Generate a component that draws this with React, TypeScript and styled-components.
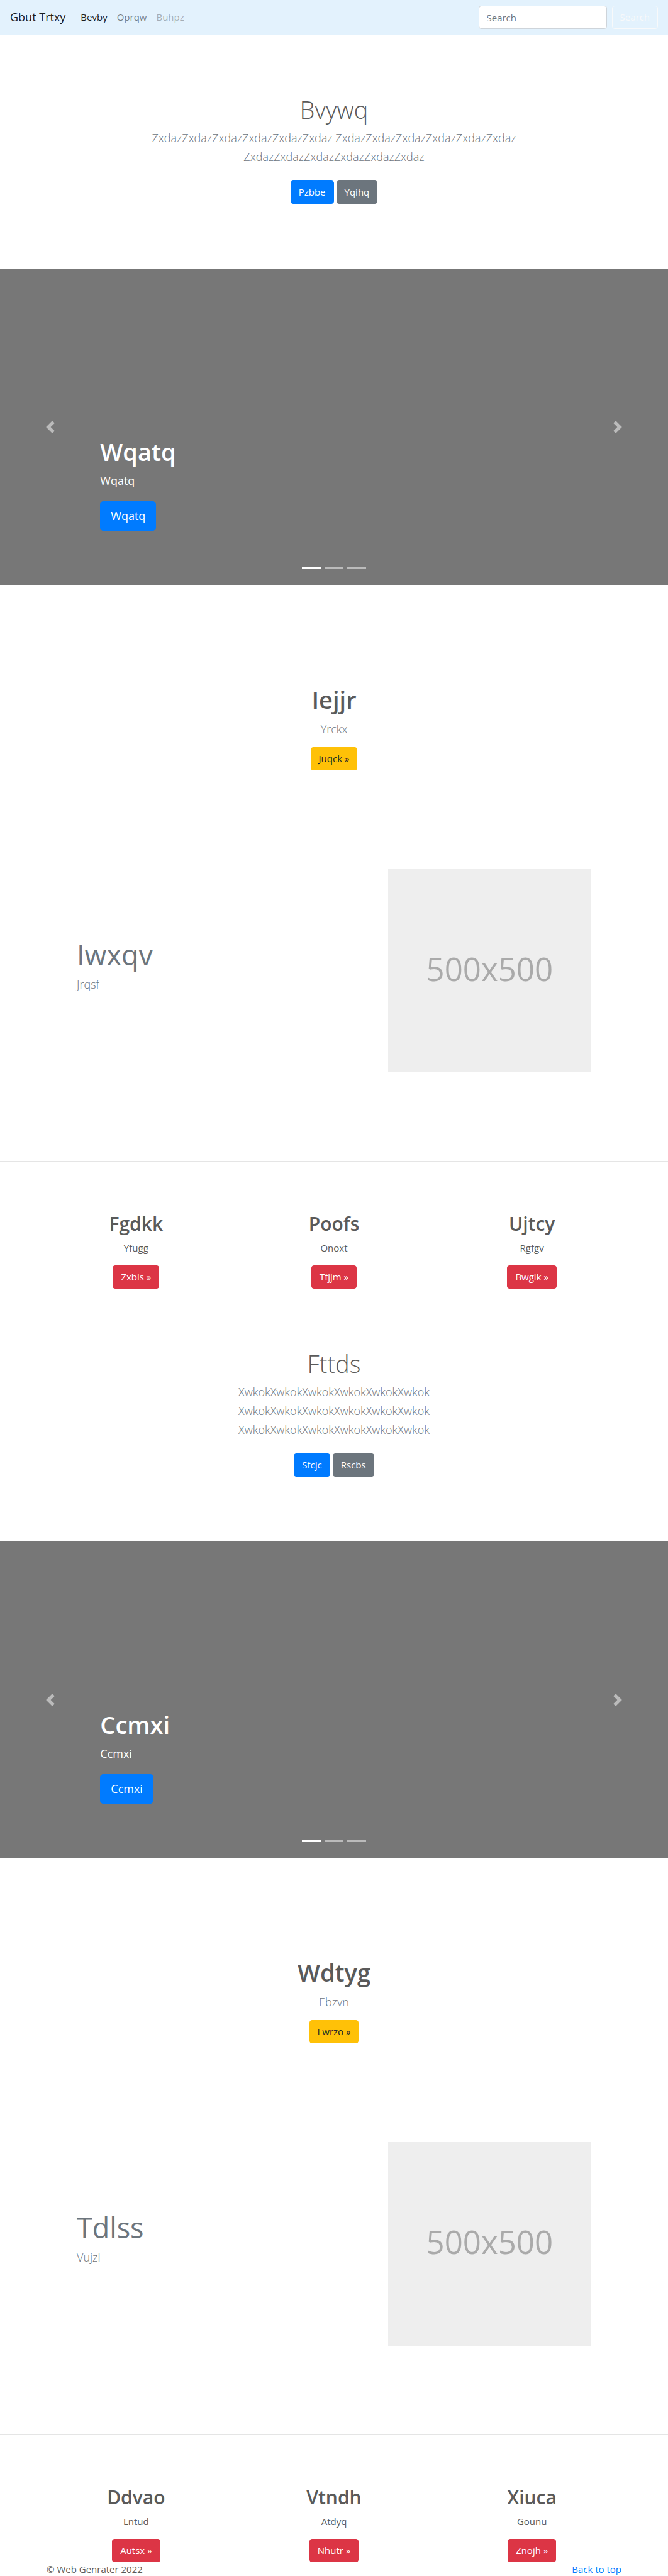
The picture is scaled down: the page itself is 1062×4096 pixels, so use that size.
import React from "react";
import styled, { createGlobalStyle, css } from "styled-components";

const GlobalStyle = createGlobalStyle`
  *, *::before, *::after { box-sizing: border-box; }
  body {
    margin: 0;
    background: #fff;
    color: #5a5a5a;
    font-family: "Open Sans", "Noto Sans", sans-serif;
    font-size: 15px;
    line-height: 23px;
  }
  h1, h2, p, ul { margin: 0; padding: 0; }
`;

type Tone = "primary" | "secondary" | "warning" | "danger";

const tones: Record<Tone, { bg: string; fg: string }> = {
  primary: { bg: "#007bff", fg: "#fff" },
  secondary: { bg: "#6c757d", fg: "#fff" },
  warning: { bg: "#ffc107", fg: "#212529" },
  danger: { bg: "#dc3545", fg: "#fff" },
};

const Navbar = styled.nav`
  display: flex;
  align-items: center;
  justify-content: space-between;
  padding: 9px 16px;
  background: #e3f2fd;
`;

const NavStart = styled.div`
  display: flex;
  align-items: center;
  gap: 24px;
`;

const Brand = styled.a`
  color: rgba(0, 0, 0, 0.9);
  font-size: 18px;
  line-height: 29px;
  text-decoration: none;
`;

const NavList = styled.ul`
  display: flex;
  gap: 15px;
  list-style: none;
`;

const NavLink = styled.a<{ $shade: number }>`
  color: rgba(0, 0, 0, ${(p) => p.$shade});
  text-decoration: none;
`;

const SearchForm = styled.form`
  display: flex;
  gap: 8px;
`;

const SearchInput = styled.input`
  width: 204px;
  height: 37px;
  padding: 6px 12px;
  border: 1px solid #ced4da;
  border-radius: 4px;
  background: #fff;
  color: #495057;
  font: inherit;
  &::placeholder { color: #6c757d; opacity: 1; }
`;

const SearchButton = styled.button`
  padding: 6px 12px;
  border: 1px solid #f8f9fa;
  border-radius: 4px;
  background: transparent;
  color: #f8f9fa;
  font: inherit;
`;

const Button = styled.a<{ $tone: Tone; $large?: boolean }>`
  display: inline-block;
  padding: 6px 12px;
  border: 1px solid ${(p) => tones[p.$tone].bg};
  border-radius: 4px;
  background: ${(p) => tones[p.$tone].bg};
  color: ${(p) => tones[p.$tone].fg};
  text-decoration: none;
  ${(p) =>
    p.$large &&
    css`
      padding: 8px 16px;
      border-radius: 5px;
      font-size: 18px;
      line-height: 29px;
    `}
`;

const Heading = styled.h1`
  margin-bottom: 8px;
  font-size: 38px;
  line-height: 47px;
  font-weight: 600;
`;

const HeroHeading = styled(Heading)`
  margin-bottom: 6px;
  font-weight: 300;
`;

const Lead = styled.p`
  color: #6c757d;
  font-size: 18px;
  line-height: 30px;
  font-weight: 300;
`;

const Hero = styled.section`
  display: flex;
  flex-direction: column;
  align-items: center;
  padding: 96px 16px 103px;
  text-align: center;
`;

const HeroLead = styled(Lead)`
  margin-bottom: 23px;
`;

const ButtonRow = styled.div`
  display: flex;
  gap: 4px;
`;

const CarouselBox = styled.section`
  position: relative;
  display: flex;
  flex-direction: column;
  justify-content: flex-end;
  height: 503px;
  padding: 0 15% 86px;
  background: #777;
  color: #fff;
`;

const Caption = styled.div`
  display: flex;
  flex-direction: column;
  align-items: flex-start;
`;

const CaptionText = styled.p`
  margin-bottom: 19px;
  font-size: 18px;
  line-height: 28px;
`;

const Control = styled.button<{ $side: "left" | "right" }>`
  position: absolute;
  top: 0;
  bottom: 0;
  ${(p) => p.$side}: 0;
  display: flex;
  align-items: center;
  justify-content: center;
  width: 15%;
  padding: 0;
  border: 0;
  background: none;
  color: #fff;
  opacity: 0.5;
`;

const Indicators = styled.div`
  position: absolute;
  right: 0;
  bottom: 25px;
  left: 0;
  display: flex;
  justify-content: center;
  gap: 6px;
`;

const Indicator = styled.button<{ $active: boolean }>`
  width: 30px;
  height: 3px;
  padding: 0;
  border: 0;
  background: #fff;
  opacity: ${(p) => (p.$active ? 1 : 0.5)};
`;

const Callout = styled.section`
  display: flex;
  flex-direction: column;
  align-items: center;
  padding: 159px 16px 157px;
  text-align: center;
`;

const CalloutLead = styled(Lead)`
  margin-bottom: 14px;
`;

const Container = styled.div`
  max-width: 944px;
  margin: 0 auto;
`;

const Feature = styled(Container)`
  display: grid;
  grid-template-columns: repeat(12, 1fr);
  column-gap: 30px;
  align-items: center;
  padding: 0 63px;
`;

const FeatureText = styled.div`
  grid-column: span 7;
  padding-bottom: 20px;
`;

const FeatureHeading = styled.h2`
  margin-bottom: 2px;
  color: #6c757d;
  font-size: 45px;
  line-height: 60px;
  font-weight: 400;
`;

const Placeholder = styled.div`
  grid-column: span 5;
  display: flex;
  align-items: center;
  justify-content: center;
  aspect-ratio: 1;
  padding-bottom: 8px;
  background: #eee;
  color: #aaa;
  font-size: 51px;
  line-height: 60px;
`;

const Divider = styled.hr`
  height: 1px;
  margin: 141px 0 80px;
  border: 0;
  background: #e5e5e5;
`;

const Columns = styled(Container)`
  display: grid;
  grid-template-columns: repeat(3, 1fr);
`;

const Column = styled.div`
  display: flex;
  flex-direction: column;
  align-items: center;
`;

const ColumnHeading = styled.h2`
  margin-bottom: 8px;
  font-size: 30px;
  line-height: 38px;
  font-weight: 600;
`;

const ColumnText = styled.p`
  margin-bottom: 16px;
`;

const Footer = styled.footer`
  display: flex;
  justify-content: space-between;
  max-width: 944px;
  margin: 0 auto;
  padding: 0 15px;
`;

const TopLink = styled.a`
  color: #007bff;
  text-decoration: none;
`;

const Carousel = ({ title }: { title: string }) => (
  <CarouselBox>
    <Caption>
      <Heading>{title}</Heading>
      <CaptionText>{title}</CaptionText>
      <Button href="#" $tone="primary" $large>{title}</Button>
    </Caption>
    <Control type="button" $side="left" aria-label="Previous">
      <svg width="20" height="20" viewBox="0 0 8 8" fill="currentColor">
        <path d="M5.25 0l-4 4 4 4 1.5-1.5-2.5-2.5 2.5-2.5-1.5-1.5z" />
      </svg>
    </Control>
    <Control type="button" $side="right" aria-label="Next">
      <svg width="20" height="20" viewBox="0 0 8 8" fill="currentColor">
        <path d="M2.75 0l-1.5 1.5 2.5 2.5-2.5 2.5 1.5 1.5 4-4-4-4z" />
      </svg>
    </Control>
    <Indicators>
      {[0, 1, 2].map((i) => (
        <Indicator key={i} type="button" $active={i === 0} aria-label={`Slide ${i + 1}`} />
      ))}
    </Indicators>
  </CarouselBox>
);

interface BlockProps {
  hero: { title: string; lines: string[]; actions: [string, string] };
  slide: string;
  callout: { title: string; text: string; action: string };
  feature: { title: string; text: string };
  columns: { title: string; text: string; action: string }[];
}

const Block = ({ hero, slide, callout, feature, columns }: BlockProps) => (
  <>
    <Hero>
      <HeroHeading>{hero.title}</HeroHeading>
      <HeroLead>
        {hero.lines.map((line, i) => (
          <React.Fragment key={i}>
            {i > 0 && <br />}
            {line}
          </React.Fragment>
        ))}
      </HeroLead>
      <ButtonRow>
        <Button href="#" $tone="primary">{hero.actions[0]}</Button>
        <Button href="#" $tone="secondary">{hero.actions[1]}</Button>
      </ButtonRow>
    </Hero>
    <Carousel title={slide} />
    <Callout>
      <Heading>{callout.title}</Heading>
      <CalloutLead>{callout.text}</CalloutLead>
      <Button href="#" $tone="warning">{callout.action} »</Button>
    </Callout>
    <Feature>
      <FeatureText>
        <FeatureHeading>{feature.title}</FeatureHeading>
        <Lead>{feature.text}</Lead>
      </FeatureText>
      <Placeholder>500x500</Placeholder>
    </Feature>
    <Divider />
    <Columns>
      {columns.map((c) => (
        <Column key={c.title}>
          <ColumnHeading>{c.title}</ColumnHeading>
          <ColumnText>{c.text}</ColumnText>
          <Button href="#" $tone="danger">{c.action} »</Button>
        </Column>
      ))}
    </Columns>
  </>
);

const zx = "Zxdaz".repeat(6);
const xw = "Xwkok".repeat(6);

const blocks: BlockProps[] = [
  {
    hero: { title: "Bvywq", lines: [`${zx} ${zx}`, zx], actions: ["Pzbbe", "Yqihq"] },
    slide: "Wqatq",
    callout: { title: "Iejjr", text: "Yrckx", action: "Juqck" },
    feature: { title: "Iwxqv", text: "Jrqsf" },
    columns: [
      { title: "Fgdkk", text: "Yfugg", action: "Zxbls" },
      { title: "Poofs", text: "Onoxt", action: "Tfjjm" },
      { title: "Ujtcy", text: "Rgfgv", action: "Bwgik" },
    ],
  },
  {
    hero: { title: "Fttds", lines: [xw, xw, xw], actions: ["Sfcjc", "Rscbs"] },
    slide: "Ccmxi",
    callout: { title: "Wdtyg", text: "Ebzvn", action: "Lwrzo" },
    feature: { title: "Tdlss", text: "Vujzl" },
    columns: [
      { title: "Ddvao", text: "Lntud", action: "Autsx" },
      { title: "Vtndh", text: "Atdyq", action: "Nhutr" },
      { title: "Xiuca", text: "Gounu", action: "Znojh" },
    ],
  },
];

export default function App() {
  return (
    <>
      <GlobalStyle />
      <Navbar>
        <NavStart>
          <Brand href="#">Gbut Trtxy</Brand>
          <NavList>
            <li><NavLink href="#" $shade={0.9}>Bevby</NavLink></li>
            <li><NavLink href="#" $shade={0.5}>Oprqw</NavLink></li>
            <li><NavLink href="#" $shade={0.3}>Buhpz</NavLink></li>
          </NavList>
        </NavStart>
        <SearchForm onSubmit={(e) => e.preventDefault()}>
          <SearchInput type="search" placeholder="Search" aria-label="Search" />
          <SearchButton type="submit">Search</SearchButton>
        </SearchForm>
      </Navbar>
      <main>
        {blocks.map((b) => (
          <Block key={b.slide} {...b} />
        ))}
      </main>
      <Footer>
        <span>© Web Genrater 2022</span>
        <TopLink href="#">Back to top</TopLink>
      </Footer>
    </>
  );
}
